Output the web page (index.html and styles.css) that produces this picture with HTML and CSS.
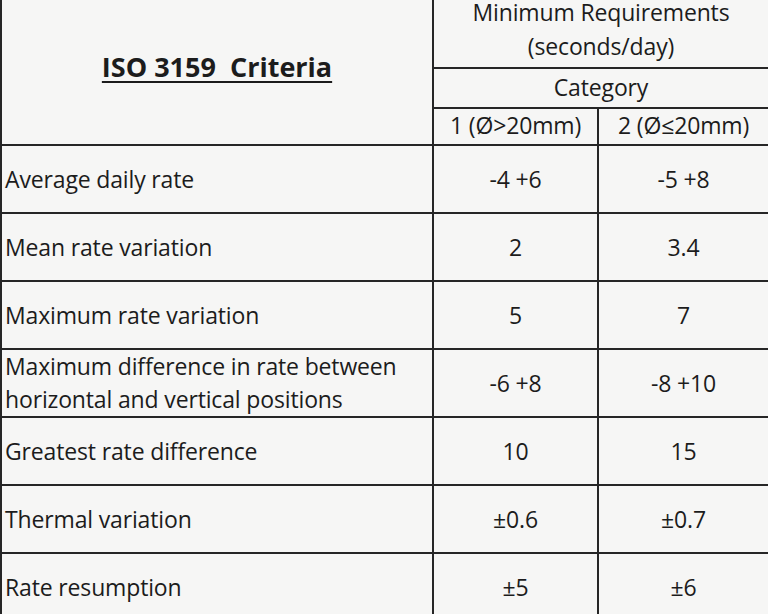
FILE: index.html
```html
<!DOCTYPE html>
<html>
<head>
<meta charset="utf-8">
<link rel="stylesheet" href="styles.css">
</head>
<body>
<table class="iso">
  <colgroup>
    <col class="c-label">
    <col class="c-cat1">
    <col class="c-cat2">
  </colgroup>
  <thead>
    <tr class="h1">
      <th rowspan="3" class="title"><span>ISO 3159&nbsp; Criteria</span></th>
      <th colspan="2" class="min"><span class="ln">Minimum Requirements</span><span class="ln">(seconds/day)</span></th>
    </tr>
    <tr class="h2">
      <th colspan="2" class="cat">Category</th>
    </tr>
    <tr class="h3">
      <th class="sub">1 (Ø&gt;20mm)</th>
      <th class="sub">2 (Ø≤20mm)</th>
    </tr>
  </thead>
  <tbody>
    <tr><td class="lbl">Average daily rate</td><td>-4 +6</td><td>-5 +8</td></tr>
    <tr><td class="lbl">Mean rate variation</td><td>2</td><td>3.4</td></tr>
    <tr><td class="lbl">Maximum rate variation</td><td>5</td><td>7</td></tr>
    <tr><td class="lbl">Maximum difference in rate between<br>horizontal and vertical positions</td><td>-6 +8</td><td>-8 +10</td></tr>
    <tr><td class="lbl">Greatest rate difference</td><td>10</td><td>15</td></tr>
    <tr><td class="lbl">Thermal variation</td><td>±0.6</td><td>±0.7</td></tr>
    <tr><td class="lbl">Rate resumption</td><td>±5</td><td>±6</td></tr>
  </tbody>
</table>
</body>
</html>
```

FILE: styles.css
```css
html, body {
  margin: 0;
  padding: 0;
  background: #f6f6f5;
  overflow: hidden;
}

.iso {
  border-collapse: collapse;
  table-layout: fixed;
  width: 768px;
  font-family: "Open Sans", "DejaVu Sans", sans-serif;
  font-size: 23px;
  color: #1c1c1c;
  background: #f6f6f5;
}

.c-label { width: 432px; }
.c-cat1 { width: 165px; }
.c-cat2 { width: 171px; }

.iso th,
.iso td {
  border: 2px solid #262626;
  padding: 0;
  text-align: center;
  vertical-align: middle;
  font-weight: normal;
  line-height: 28px;
  letter-spacing: -0.15px;
}

.iso .h1 th {
  border-top: 0;
}

.iso .title {
  font-weight: bold;
  font-size: 27px;
  letter-spacing: 0;
  padding-bottom: 10px;
}

.iso .title span {
  text-decoration: underline;
  text-underline-offset: 4px;
  text-decoration-thickness: 2px;
}

.h1 { height: 68px; }
.iso .min {
  vertical-align: top;
  line-height: 24px;
}
.iso .min .ln {
  display: block;
}
.iso .min .ln + .ln {
  margin-top: 10px;
}
.h2 { height: 40px; }
.iso .cat { padding-bottom: 2px; }
.h3 { height: 37px; }
.iso .sub { padding-bottom: 3px; }

.iso tbody tr { height: 68px; }

.iso tbody td {
  line-height: 33px;
}

.iso td.lbl {
  text-align: left;
  padding-left: 3px;
}
```
